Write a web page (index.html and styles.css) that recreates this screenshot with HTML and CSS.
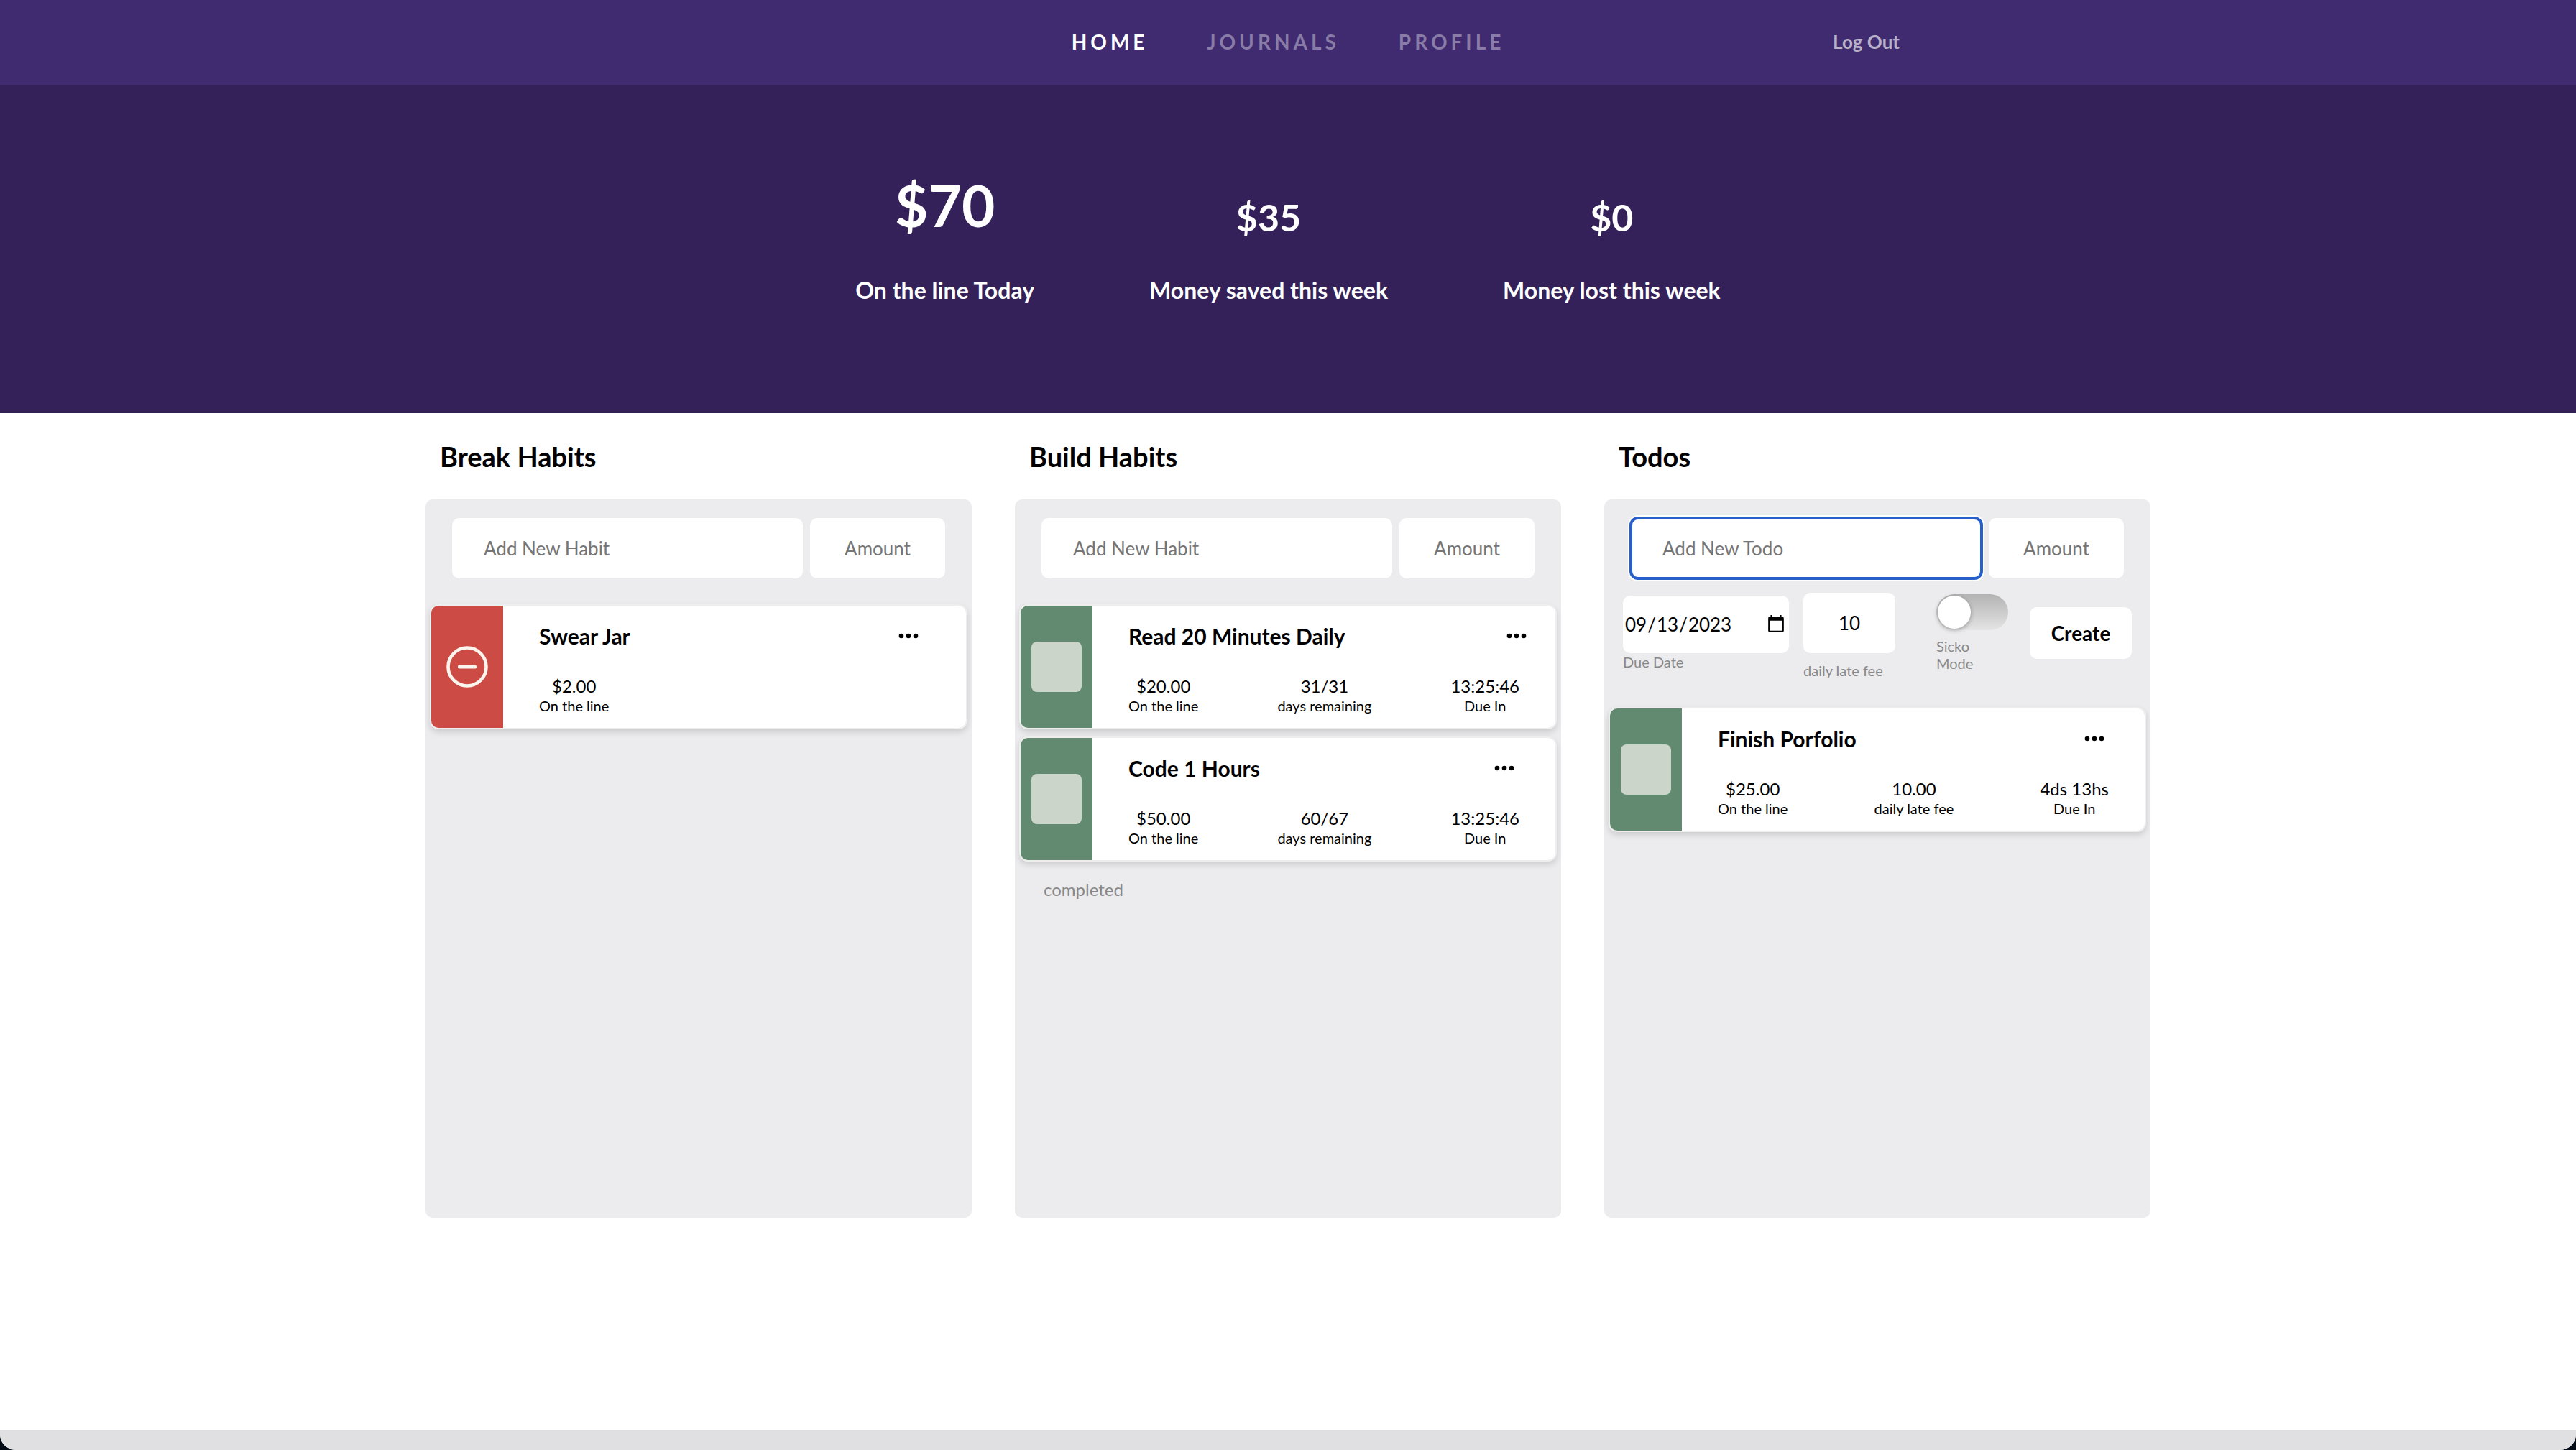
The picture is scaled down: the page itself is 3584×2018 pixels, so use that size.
FILE: index.html
```html
<!DOCTYPE html>
<html lang="en">
<head>
  <meta charset="utf-8">
  <meta name="viewport" content="width=device-width, initial-scale=1">
  <title>Habits</title>
  <link rel="stylesheet" href="styles.css">
</head>
<body>
  <div class="page">
    <header class="topbar">
      <div class="topbar-inner">
        <nav class="nav" aria-label="Main">
          <a class="nav-link nav-link-current" href="#home" aria-current="page">HOME</a>
          <a class="nav-link" href="#journals">JOURNALS</a>
          <a class="nav-link" href="#profile">PROFILE</a>
        </nav>
        <button class="logout" type="button">Log Out</button>
      </div>
    </header>

    <section class="summary" aria-label="Summary">
      <div class="figure">
        <p class="figure-value figure-value-main">$70</p>
        <p class="figure-label">On the line Today</p>
      </div>
      <div class="figure">
        <p class="figure-value">$35</p>
        <p class="figure-label">Money saved this week</p>
      </div>
      <div class="figure">
        <p class="figure-value">$0</p>
        <p class="figure-label">Money lost this week</p>
      </div>
    </section>

    <main class="board">
      <section class="column">
        <h2 class="column-title">Break Habits</h2>
        <div class="panel">
          <form class="entry">
            <input class="field field-name" type="text" placeholder="Add New Habit" aria-label="Habit to break">
            <input class="field field-amount" type="text" placeholder="Amount" aria-label="Amount">
          </form>
          <div class="cards">
            <article class="card">
              <button class="card-side card-side-break" type="button" aria-label="Record a slip">
                <svg class="minus" viewBox="0 0 58 58" aria-hidden="true">
                  <circle cx="29" cy="29" r="26.5" fill="none" stroke="#fbf5ee" stroke-width="4.6"/>
                  <rect x="16" y="26.5" width="26" height="5" rx="2" fill="#fbf5ee"/>
                </svg>
              </button>
              <div class="card-body">
                <div class="card-head">
                  <h3 class="card-title">Swear Jar</h3>
                  <button class="more" type="button" aria-label="More options">
                    <svg class="dots" viewBox="0 0 28 8" aria-hidden="true"><circle cx="4" cy="4" r="3.3"/><circle cx="14" cy="4" r="3.3"/><circle cx="24" cy="4" r="3.3"/></svg>
                  </button>
                </div>
                <div class="stats">
                  <div class="stat"><span class="stat-value">$2.00</span><span class="stat-label">On the line</span></div>
                </div>
              </div>
            </article>
          </div>
        </div>
      </section>

      <section class="column">
        <h2 class="column-title">Build Habits</h2>
        <div class="panel">
          <form class="entry">
            <input class="field field-name" type="text" placeholder="Add New Habit" aria-label="Habit to build">
            <input class="field field-amount" type="text" placeholder="Amount" aria-label="Amount">
          </form>
          <div class="cards">
            <article class="card">
              <div class="card-side"><input class="tick" type="checkbox" aria-label="Read 20 Minutes Daily done"></div>
              <div class="card-body">
                <div class="card-head">
                  <h3 class="card-title">Read 20 Minutes Daily</h3>
                  <button class="more" type="button" aria-label="More options">
                    <svg class="dots" viewBox="0 0 28 8" aria-hidden="true"><circle cx="4" cy="4" r="3.3"/><circle cx="14" cy="4" r="3.3"/><circle cx="24" cy="4" r="3.3"/></svg>
                  </button>
                </div>
                <div class="stats">
                  <div class="stat"><span class="stat-value">$20.00</span><span class="stat-label">On the line</span></div>
                  <div class="stat"><span class="stat-value">31/31</span><span class="stat-label">days remaining</span></div>
                  <div class="stat"><span class="stat-value">13:25:46</span><span class="stat-label">Due In</span></div>
                </div>
              </div>
            </article>
            <article class="card">
              <div class="card-side"><input class="tick" type="checkbox" aria-label="Code 1 Hours done"></div>
              <div class="card-body">
                <div class="card-head">
                  <h3 class="card-title">Code 1 Hours</h3>
                  <button class="more" type="button" aria-label="More options">
                    <svg class="dots" viewBox="0 0 28 8" aria-hidden="true"><circle cx="4" cy="4" r="3.3"/><circle cx="14" cy="4" r="3.3"/><circle cx="24" cy="4" r="3.3"/></svg>
                  </button>
                </div>
                <div class="stats">
                  <div class="stat"><span class="stat-value">$50.00</span><span class="stat-label">On the line</span></div>
                  <div class="stat"><span class="stat-value">60/67</span><span class="stat-label">days remaining</span></div>
                  <div class="stat"><span class="stat-value">13:25:46</span><span class="stat-label">Due In</span></div>
                </div>
              </div>
            </article>
          </div>
          <p class="completed">completed</p>
        </div>
      </section>

      <section class="column">
        <h2 class="column-title">Todos</h2>
        <div class="panel">
          <form>
            <div class="entry">
              <input class="field field-name field-active" type="text" placeholder="Add New Todo" aria-label="Todo">
              <input class="field field-amount" type="text" placeholder="Amount" aria-label="Amount">
            </div>
            <div class="details">
              <div class="detail detail-date">
                <input class="field field-date" id="due-date" type="date" value="2023-09-13">
                <label class="hint" for="due-date">Due Date</label>
              </div>
              <div class="detail detail-fee">
                <input class="field field-fee" id="late-fee" type="text" inputmode="numeric" value="10">
                <label class="hint" for="late-fee">daily late fee</label>
              </div>
              <div class="detail detail-switch">
                <input class="switch" id="sicko" type="checkbox" role="switch">
                <label class="hint hint-switch" for="sicko">Sicko Mode</label>
              </div>
              <button class="create" type="submit">Create</button>
            </div>
          </form>
          <div class="cards">
            <article class="card">
              <div class="card-side"><input class="tick" type="checkbox" aria-label="Finish Porfolio done"></div>
              <div class="card-body">
                <div class="card-head">
                  <h3 class="card-title">Finish Porfolio</h3>
                  <button class="more" type="button" aria-label="More options">
                    <svg class="dots" viewBox="0 0 28 8" aria-hidden="true"><circle cx="4" cy="4" r="3.3"/><circle cx="14" cy="4" r="3.3"/><circle cx="24" cy="4" r="3.3"/></svg>
                  </button>
                </div>
                <div class="stats">
                  <div class="stat"><span class="stat-value">$25.00</span><span class="stat-label">On the line</span></div>
                  <div class="stat"><span class="stat-value">10.00</span><span class="stat-label">daily late fee</span></div>
                  <div class="stat"><span class="stat-value">4ds 13hs</span><span class="stat-label">Due In</span></div>
                </div>
              </div>
            </article>
          </div>
        </div>
      </section>
    </main>

    <footer class="bottom-bar"></footer>
  </div>
</body>
</html>
```
FILE: styles.css
```css
* {
  box-sizing: border-box;
}

html {
  background: #020b16;
}

body {
  margin: 0;
  font-family: Lato, "Liberation Sans", sans-serif;
  font-size: 26px;
  color: #000;
}

h2,
h3,
p {
  margin: 0;
}

button,
input {
  margin: 0;
  border: 0;
  font-family: inherit;
  color: inherit;
}

button {
  padding: 0;
  background: none;
  cursor: pointer;
}

.page {
  display: flex;
  flex-direction: column;
  min-height: 100vh;
  overflow: hidden;
  background: #fff;
  border-radius: 0 0 22px 22px;
}

/* Top bar */

.topbar {
  background: #402b70;
}

.topbar-inner {
  display: grid;
  grid-template-columns: 1fr auto 1fr;
  align-items: center;
  max-width: 1702px;
  margin: 0 auto;
  padding: 41px 0 43px;
}

.nav {
  display: flex;
  grid-column: 2;
  gap: 82px;
}

.nav-link {
  font-size: 28px;
  font-weight: 700;
  line-height: 34px;
  letter-spacing: 5px;
  color: #897ca7;
  text-decoration: none;
}

.nav-link-current {
  color: #fff;
}

.logout {
  justify-self: end;
  font-size: 26px;
  font-weight: 700;
  line-height: 34px;
  color: #b9b0c9;
}

/* Summary */

.summary {
  display: flex;
  justify-content: center;
  align-items: flex-end;
  gap: 160px;
  padding: 119px 40px 152px;
  background: #342159;
  color: #fff;
  font-weight: 700;
  text-align: center;
}

.figure {
  display: flex;
  flex-direction: column;
  gap: 52px;
}

.figure-value {
  font-size: 52px;
  line-height: 62px;
}

.figure-value-main {
  font-size: 80px;
  line-height: 96px;
}

.figure-label {
  font-size: 32px;
  line-height: 38px;
}

/* Board */

.board {
  display: grid;
  grid-template-columns: repeat(3, minmax(0, 1fr));
  gap: 60px;
  flex: 1;
  align-items: start;
  width: 100%;
  max-width: 2400px;
  margin: 0 auto;
  padding: 38px 0;
}

.column-title {
  margin: 0 20px 38px;
  font-size: 38px;
  line-height: 44px;
}

.panel {
  min-height: 1000px;
  padding: 26px 6px;
  background: #ececee;
  border-radius: 10px;
}

.entry {
  display: flex;
  gap: 10px;
  padding: 0 31px;
}

.field {
  min-width: 0;
  height: 84px;
  background: #fff;
  border-radius: 10px;
  font-size: 26px;
}

.field::placeholder {
  color: #757575;
  opacity: 1;
}

.field-name {
  flex: 1;
  padding: 0 44px;
}

.field-amount {
  width: 188px;
  padding: 0 10px;
  text-align: center;
}

.field-active {
  outline: 4px solid #2660cb;
  outline-offset: -2px;
  box-shadow: 0 0 0 4px #fff;
}

.details {
  display: flex;
  align-items: flex-start;
  gap: 20px;
  padding: 20px 20px 3px;
}

.detail {
  display: flex;
  flex-direction: column;
}

.detail-date {
  flex: 1;
  padding-top: 4px;
}

.field-date {
  height: 80px;
  width: 100%;
  padding: 0 2px;
}

.field-date::-webkit-calendar-picker-indicator {
  width: 28px;
  height: 28px;
}

.detail-fee {
  gap: 12px;
  width: 128px;
}

.field-fee {
  width: 100%;
  padding: 0;
  text-align: center;
}

.detail-switch {
  gap: 10px;
  padding: 2px 10px 0 37px;
}

.hint {
  font-size: 20px;
  line-height: 24px;
  color: #888;
}

.hint-switch {
  width: 80px;
}

.switch {
  display: flex;
  width: 100px;
  height: 50px;
  padding: 2px;
  appearance: none;
  background: linear-gradient(#b3b3b3, #e4e4e4);
  border-radius: 25px;
}

.switch::before {
  content: "";
  width: 46px;
  height: 46px;
  background: #fff;
  border-radius: 50%;
  box-shadow: 0 2px 6px rgba(0, 0, 0, 0.3);
}

.switch:checked {
  justify-content: flex-end;
}

.create {
  width: 142px;
  height: 72px;
  margin-top: 20px;
  background: #fff;
  border-radius: 10px;
  font-size: 28px;
  font-weight: 700;
}

/* Cards */

.cards {
  display: flex;
  flex-direction: column;
  gap: 10px;
  padding-top: 36px;
}

.card {
  display: flex;
  border: 2px solid #eee;
  border-radius: 12px;
  background: #fff;
  background-clip: padding-box;
  box-shadow: 0 4px 8px rgba(0, 0, 0, 0.14);
}

.card-side {
  display: flex;
  justify-content: center;
  align-items: center;
  width: 100px;
  background: #628a70;
  border-radius: 10px 0 0 10px;
}

.card-side-break {
  background: #cc4c45;
}

.minus {
  width: 58px;
  height: 58px;
}

.tick {
  width: 70px;
  height: 70px;
  appearance: none;
  background: #cbd5c9;
  border-radius: 8px;
}

.tick:checked {
  background: #fff;
}

.card-body {
  flex: 1;
  padding: 24px 0 19px 50px;
}

.card-head {
  display: flex;
}

.card-title {
  flex: 7 0 auto;
  font-size: 30px;
  line-height: 36px;
}

.more {
  display: flex;
  flex: 3 0 auto;
  justify-content: center;
  align-items: center;
}

.dots {
  width: 28px;
  height: 8px;
}

.stats {
  display: flex;
  justify-content: space-between;
  padding: 37px 50px 0 0;
}

.stat {
  display: flex;
  flex-direction: column;
  align-items: center;
}

.stat-value {
  font-size: 24px;
  line-height: 30px;
}

.stat-label {
  font-size: 20px;
  line-height: 24px;
}

.completed {
  padding: 24px 34px 0;
  font-size: 24px;
  line-height: 30px;
  color: #888;
}

.bottom-bar {
  height: 28px;
  background: #e0e0e2;
}
```
